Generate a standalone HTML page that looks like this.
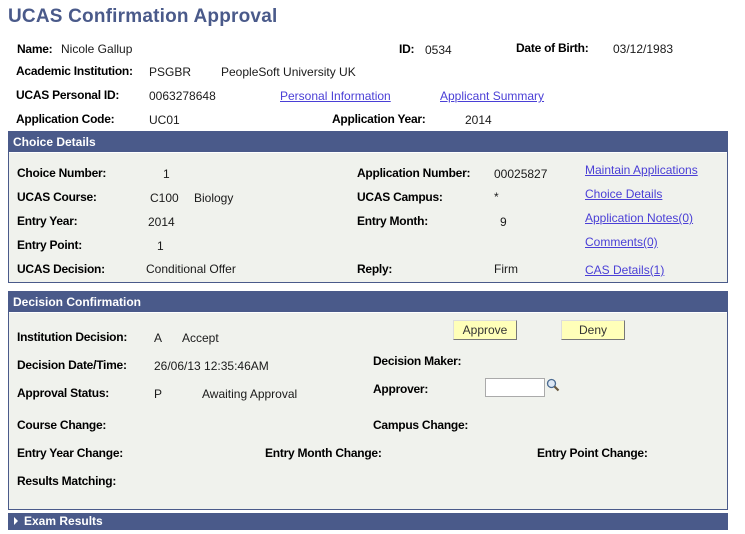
<!DOCTYPE html>
<html><head><meta charset="utf-8"><style>
body{margin:0;width:745px;height:534px;background:#fff;font-family:"Liberation Sans",Arial,sans-serif;font-size:12px;color:#1a1a1a;position:relative;overflow:hidden}
.t{position:absolute;white-space:nowrap;line-height:14px}
.b{font-weight:bold;color:#000;letter-spacing:-0.25px}
.l{color:#4a3fd6;text-decoration:underline}
.panel{position:absolute;left:8px;width:718px;border:1px solid #4a5a8a;background:#f0f2ed}
.hdr{background:#4a5a8a;color:#fff;font-weight:bold;height:20px;line-height:20px;padding-left:4px;border-bottom:1px solid #fff}
.btn{position:absolute;height:20px;line-height:18px;text-align:center;background:#ffffb9;border:1px solid #999;border-color:#ddd #777 #777 #ddd;box-sizing:border-box;color:#333}
</style></head><body>
<div class="t" style="left:8px;top:6px;font-size:19px;line-height:22px;font-weight:bold;color:#4a5a8a;letter-spacing:0.2px">UCAS Confirmation Approval</div>

<div class="t b" style="left:17px;top:42px">Name:</div><div class="t" style="left:61px;top:42px">Nicole Gallup</div>
<div class="t b" style="left:399px;top:42px">ID:</div><div class="t" style="left:425px;top:43px">0534</div>
<div class="t b" style="left:516px;top:41px">Date of Birth:</div><div class="t" style="left:613px;top:42px">03/12/1983</div>
<div class="t b" style="left:16px;top:64px">Academic Institution:</div><div class="t" style="left:149px;top:65px">PSGBR</div><div class="t" style="left:221px;top:65px">PeopleSoft University UK</div>
<div class="t b" style="left:16px;top:88px">UCAS Personal ID:</div><div class="t" style="left:149px;top:89px">0063278648</div>
<div class="t l" style="left:280px;top:89px">Personal Information</div><div class="t l" style="left:440px;top:89px">Applicant Summary</div>
<div class="t b" style="left:16px;top:112px">Application Code:</div><div class="t" style="left:149px;top:113px">UC01</div>
<div class="t b" style="left:332px;top:112px">Application Year:</div><div class="t" style="left:465px;top:113px">2014</div>

<div class="panel" style="top:131px;height:150px"><div class="hdr">Choice Details</div></div>
<div class="t b" style="left:17px;top:166px">Choice Number:</div><div class="t" style="left:163px;top:167px">1</div>
<div class="t b" style="left:17px;top:190px">UCAS Course:</div><div class="t" style="left:150px;top:191px">C100</div><div class="t" style="left:194px;top:191px">Biology</div>
<div class="t b" style="left:17px;top:214px">Entry Year:</div><div class="t" style="left:148px;top:215px">2014</div>
<div class="t b" style="left:17px;top:238px">Entry Point:</div><div class="t" style="left:157px;top:239px">1</div>
<div class="t b" style="left:17px;top:262px">UCAS Decision:</div><div class="t" style="left:146px;top:262px">Conditional Offer</div>
<div class="t b" style="left:357px;top:166px">Application Number:</div><div class="t" style="left:494px;top:167px">00025827</div>
<div class="t b" style="left:357px;top:190px">UCAS Campus:</div><div class="t" style="left:494px;top:190px">*</div>
<div class="t b" style="left:357px;top:214px">Entry Month:</div><div class="t" style="left:500px;top:215px">9</div>
<div class="t b" style="left:357px;top:262px">Reply:</div><div class="t" style="left:494px;top:262px">Firm</div>
<div class="t l" style="left:585px;top:163px">Maintain Applications</div>
<div class="t l" style="left:585px;top:187px">Choice Details</div>
<div class="t l" style="left:585px;top:211px">Application Notes(0)</div>
<div class="t l" style="left:585px;top:235px">Comments(0)</div>
<div class="t l" style="left:585px;top:263px">CAS Details(1)</div>

<div class="panel" style="top:291px;height:217px"><div class="hdr">Decision Confirmation</div></div>
<div class="btn" style="left:453px;top:320px;width:64px">Approve</div>
<div class="btn" style="left:561px;top:320px;width:64px">Deny</div>
<div class="t b" style="left:17px;top:330px">Institution Decision:</div><div class="t" style="left:154px;top:331px">A</div><div class="t" style="left:182px;top:331px">Accept</div>
<div class="t b" style="left:17px;top:358px">Decision Date/Time:</div><div class="t" style="left:154px;top:359px">26/06/13 12:35:46AM</div>
<div class="t b" style="left:373px;top:354px">Decision Maker:</div>
<div class="t b" style="left:17px;top:386px">Approval Status:</div><div class="t" style="left:154px;top:387px">P</div><div class="t" style="left:202px;top:387px">Awaiting Approval</div>
<div class="t b" style="left:373px;top:382px">Approver:</div>
<div style="position:absolute;left:485px;top:378px;width:58px;height:17px;border:1px solid #aaa;background:#fff"></div>
<svg style="position:absolute;left:546px;top:378px" width="14" height="14" viewBox="0 0 14 14"><circle cx="5.5" cy="5.5" r="4" fill="#dde8f5" stroke="#4a6a90" stroke-width="1.3"/><path d="M8.5 8.5L12.5 12.5" stroke="#6a5a40" stroke-width="2.2"/></svg>
<div class="t b" style="left:17px;top:418px">Course Change:</div>
<div class="t b" style="left:373px;top:418px">Campus Change:</div>
<div class="t b" style="left:17px;top:446px">Entry Year Change:</div>
<div class="t b" style="left:265px;top:446px">Entry Month Change:</div>
<div class="t b" style="left:537px;top:446px">Entry Point Change:</div>
<div class="t b" style="left:17px;top:474px">Results Matching:</div>

<div style="position:absolute;left:8px;top:513px;width:720px;height:17px;background:#4a5a8a"></div>
<svg style="position:absolute;left:13px;top:516px" width="6" height="10"><path d="M1 1L5 5L1 9Z" fill="#fff"/></svg>
<div class="t" style="left:24px;top:514px;color:#fff;font-weight:bold">Exam Results</div>
</body></html>
